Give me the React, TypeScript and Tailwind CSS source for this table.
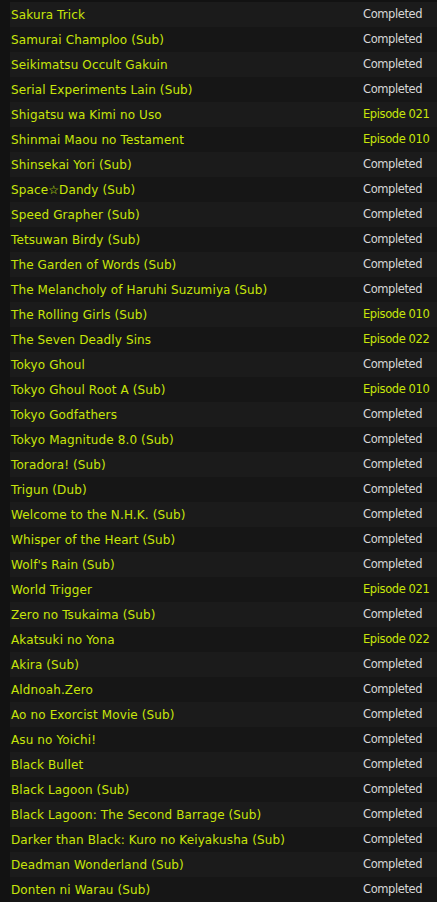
const rows: [string, string][] = [
  ["Sakura Trick", "Completed"],
  ["Samurai Champloo (Sub)", "Completed"],
  ["Seikimatsu Occult Gakuin", "Completed"],
  ["Serial Experiments Lain (Sub)", "Completed"],
  ["Shigatsu wa Kimi no Uso", "Episode 021"],
  ["Shinmai Maou no Testament", "Episode 010"],
  ["Shinsekai Yori (Sub)", "Completed"],
  ["Space☆Dandy (Sub)", "Completed"],
  ["Speed Grapher (Sub)", "Completed"],
  ["Tetsuwan Birdy (Sub)", "Completed"],
  ["The Garden of Words (Sub)", "Completed"],
  ["The Melancholy of Haruhi Suzumiya (Sub)", "Completed"],
  ["The Rolling Girls (Sub)", "Episode 010"],
  ["The Seven Deadly Sins", "Episode 022"],
  ["Tokyo Ghoul", "Completed"],
  ["Tokyo Ghoul Root A (Sub)", "Episode 010"],
  ["Tokyo Godfathers", "Completed"],
  ["Tokyo Magnitude 8.0 (Sub)", "Completed"],
  ["Toradora! (Sub)", "Completed"],
  ["Trigun (Dub)", "Completed"],
  ["Welcome to the N.H.K. (Sub)", "Completed"],
  ["Whisper of the Heart (Sub)", "Completed"],
  ["Wolf's Rain (Sub)", "Completed"],
  ["World Trigger", "Episode 021"],
  ["Zero no Tsukaima (Sub)", "Completed"],
  ["Akatsuki no Yona", "Episode 022"],
  ["Akira (Sub)", "Completed"],
  ["Aldnoah.Zero", "Completed"],
  ["Ao no Exorcist Movie (Sub)", "Completed"],
  ["Asu no Yoichi!", "Completed"],
  ["Black Bullet", "Completed"],
  ["Black Lagoon (Sub)", "Completed"],
  ["Black Lagoon: The Second Barrage (Sub)", "Completed"],
  ["Darker than Black: Kuro no Keiyakusha (Sub)", "Completed"],
  ["Deadman Wonderland (Sub)", "Completed"],
  ["Donten ni Warau (Sub)", "Completed"],
]

export default function App() {
  return (
    <div className="min-h-screen w-[437px] bg-[#121212] pt-[2px] pl-[10px] font-['DejaVu_Sans',sans-serif]">
      {rows.map(([title, status], i) => (
        <div
          key={title}
          className={`flex h-[25px] items-center pt-[1px] pl-[1px] ${i % 2 === 0 ? "bg-[#1b1b1b]" : "bg-[#161616]"}`}
        >
          <span className="flex-1 text-[12px] tracking-[0.12px] text-[#c8e60a]">{title}</span>
          <span
            className={`w-[74px] text-[11.5px] tracking-[-0.4px] ${status === "Completed" ? "text-[#d8d8d8]" : "text-[#c8e60a]"}`}
          >
            {status}
          </span>
        </div>
      ))}
    </div>
  )
}
